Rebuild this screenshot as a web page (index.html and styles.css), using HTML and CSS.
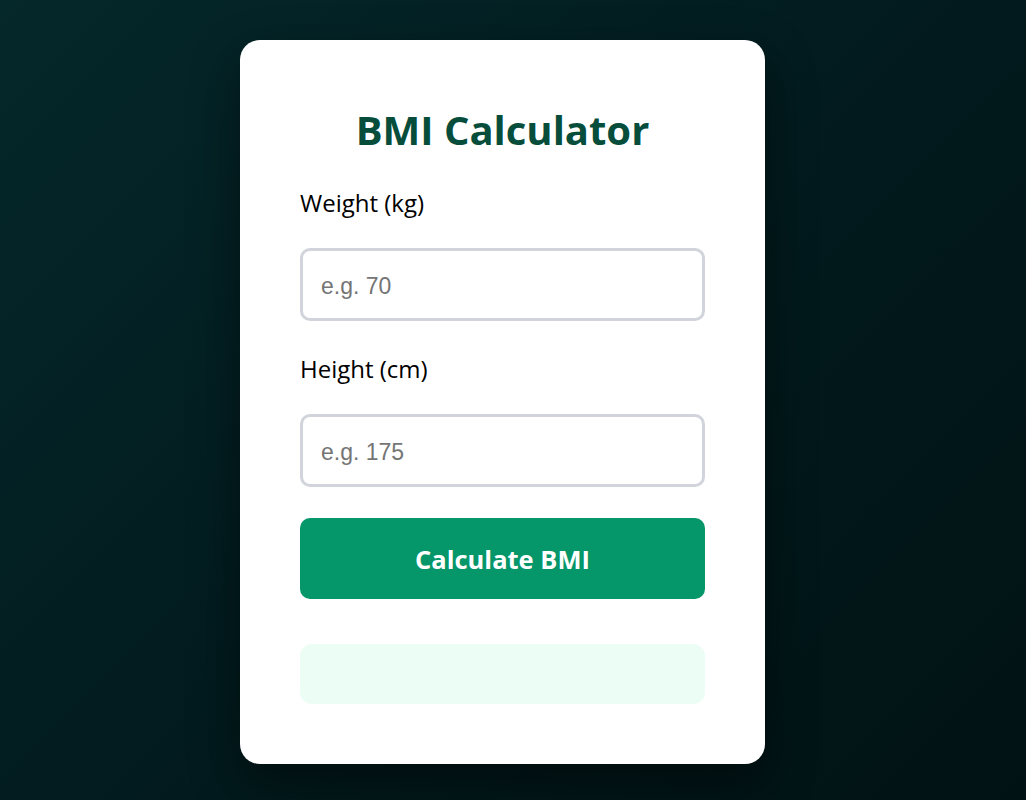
FILE: index.html
```html
<!DOCTYPE html>
<html lang="en">
<head>
<meta charset="utf-8">
<title>BMI Calculator</title>
<link rel="stylesheet" href="styles.css">
</head>
<body>
<main class="card">
  <h1 class="title">BMI Calculator</h1>
  <label class="label" for="weight">Weight (kg)</label>
  <input class="field field-first" id="weight" type="number" placeholder="e.g. 70">
  <label class="label" for="height">Height (cm)</label>
  <input class="field field-last" id="height" type="number" placeholder="e.g. 175">
  <button class="btn" type="button">Calculate BMI</button>
  <div class="result"></div>
</main>
</body>
</html>
```
FILE: styles.css
```css
html, body {
  margin: 0;
  height: 100%;
}
body {
  background: linear-gradient(135deg, #05282b 0%, #021b1e 50%, #011214 100%);
  display: flex;
  justify-content: center;
  align-items: flex-start;
  padding: 40px 21px 0 0;
  box-sizing: border-box;
  font-family: "Open Sans", "Noto Sans", sans-serif;
}
.card {
  width: 525px;
  box-sizing: border-box;
  background: #ffffff;
  border-radius: 20px;
  padding: 64px 60px 60px;
  display: flex;
  flex-direction: column;
  box-shadow: 0 20px 50px rgba(0, 0, 0, 0.45);
}
.title {
  margin: 0 0 31px;
  font-size: 40px;
  line-height: 52px;
  font-weight: 700;
  color: #064e3b;
  text-align: center;
}
.label {
  display: block;
  font-size: 24px;
  line-height: 32px;
  color: #000000;
  margin-bottom: 29px;
}
.field {
  display: block;
  box-sizing: border-box;
  width: 100%;
  height: 73px;
  border: 3px solid #d1d5db;
  border-radius: 10px;
  padding: 4px 18px 0;
  font-family: "Liberation Sans", Arial, sans-serif;
  font-size: 23px;
  color: #111;
  background: #fff;
  outline: none;
}
.field::placeholder {
  color: #757575;
}
.field-first {
  margin-bottom: 32px;
}
.field-last {
  margin-bottom: 31px;
}
.btn {
  height: 81px;
  border: none;
  border-radius: 10px;
  background: #059669;
  color: #ffffff;
  font-family: "Open Sans", "Noto Sans", sans-serif;
  font-size: 25.5px;
  font-weight: 700;
  cursor: pointer;
  margin-bottom: 45px;
}
.result {
  height: 60px;
  border-radius: 12px;
  background: #ecfdf5;
}
```
